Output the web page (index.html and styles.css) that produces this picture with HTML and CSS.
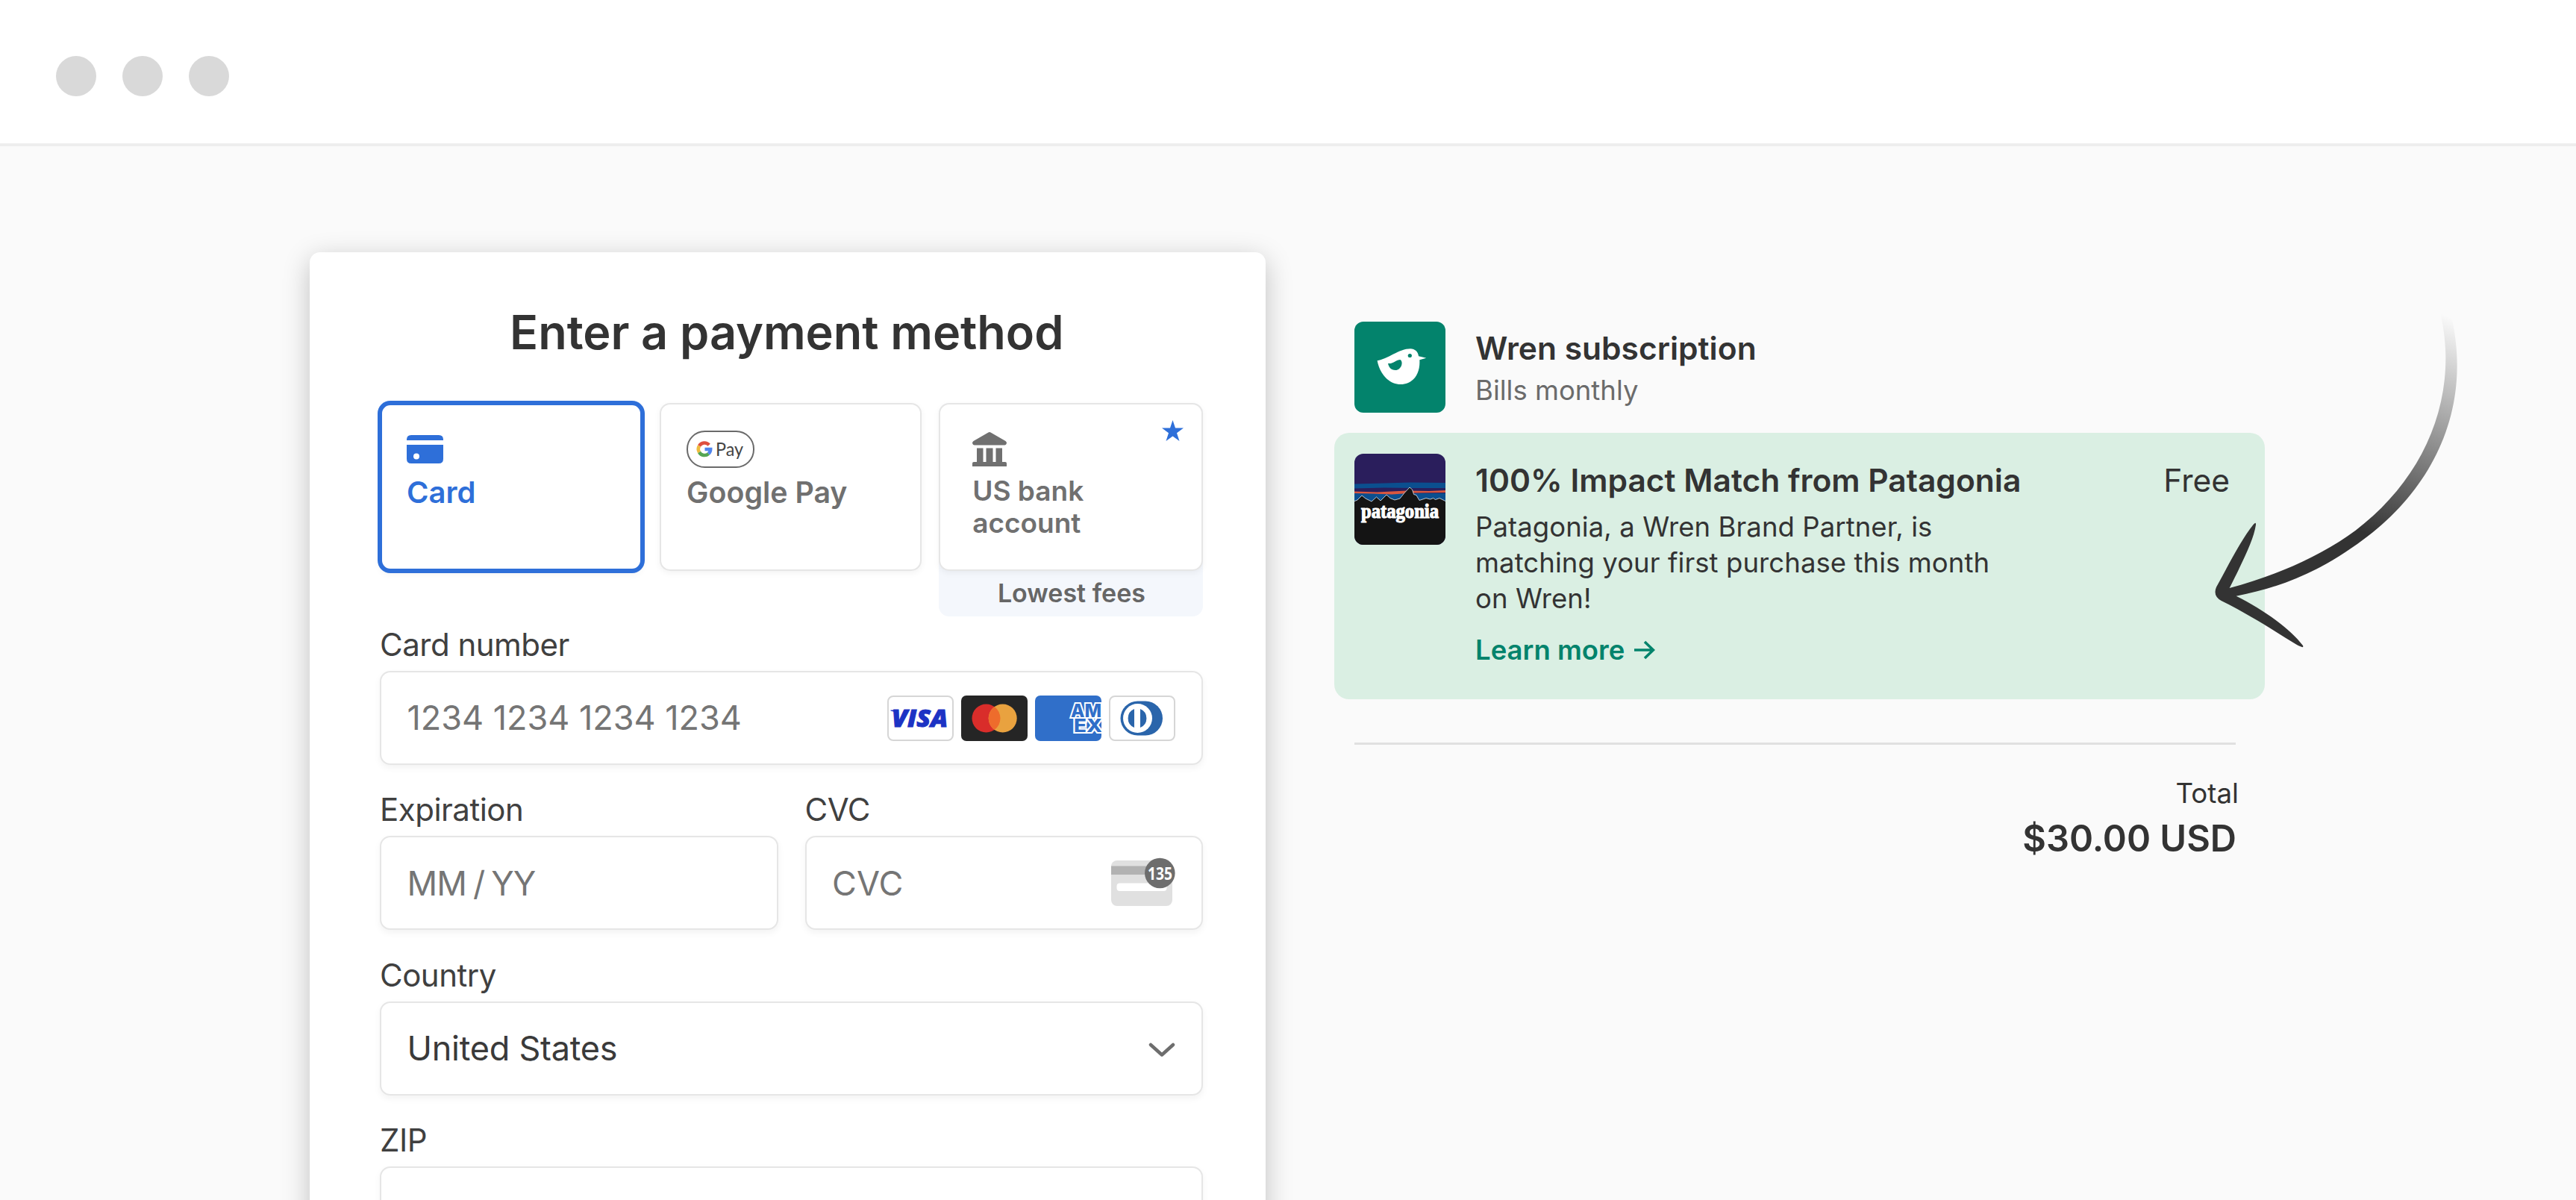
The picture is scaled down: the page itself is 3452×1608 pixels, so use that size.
FILE: index.html
```html
<!DOCTYPE html>
<html lang="en">
<head>
<meta charset="utf-8">
<title>Enter a payment method</title>
<link rel="stylesheet" href="styles.css">
</head>
<body>
<header class="chrome">
  <span class="dot"></span><span class="dot"></span><span class="dot"></span>
</header>
<main class="page">
  <section class="card">
    <h1 class="title">Enter a payment method</h1>
    <div class="form">
      <div class="tabs">
        <div class="tab tab-active">
          <div class="tab-icon">
            <svg width="49" height="38" viewBox="0 0 49 38"><path fill="#2e6fd9" d="M6 0H43Q49 0 49 6V7H0V6Q0 0 6 0Z"/><path fill="#2e6fd9" fill-rule="evenodd" d="M0 13H49V32Q49 38 43 38H6Q0 38 0 32ZM13 24.500A4 4 0 1 0 13 32.500A4 4 0 1 0 13 24.500Z"/></svg>
          </div>
          <div class="tab-label">Card</div>
        </div>
        <div class="tab">
          <div class="tab-icon">
            <svg width="91" height="50" viewBox="0 0 91 50"><rect x="1" y="1" width="89" height="48" rx="23.500" fill="#fff" stroke="#6a6a6a" stroke-width="2"/>
              <g fill="none" stroke-width="4.500"><path stroke="#de5040" d="M30.200 19.200A8.200 8.200 0 0 0 17 20.500"/><path stroke="#eebb3e" d="M17 20.500A8.200 8.200 0 0 0 17 29"/><path stroke="#55a653" d="M17 29A8.200 8.200 0 0 0 29.500 31"/><path stroke="#5085ed" d="M29.500 31A8.200 8.200 0 0 0 32.200 25H24.500"/></g>
              <text x="39" y="34" class="gpay-text" textLength="37" lengthAdjust="spacingAndGlyphs">Pay</text></svg>
          </div>
          <div class="tab-label">Google Pay</div>
        </div>
        <div class="tab-group">
          <div class="tab tab-bank">
            <div class="tab-icon">
              <svg width="46" height="46" viewBox="0 0 46 46"><path fill="#707070" d="M21 .700Q23 -.500 25 .700L44.500 12Q46 13 46 14.500Q45.500 17.500 43 17.500H3Q.500 17.500 0 14.500Q0 13 1.500 12ZM6 21.500H14.500V40H18.500V21.500H27.500V40H31.500V21.500H40V40H44Q46 40 46 42V46H0V42Q0 40 2 40H6Z"/></svg>
            </div>
            <div class="tab-label">US bank<br>account</div>
            <svg class="star" width="29" height="28" viewBox="0 0 29 28"><path fill="#2e6fd9" d="M14.500 0L18 10.500H29L20 17.200L23.500 28L14.500 21.400L5.500 28L9 17.200L0 10.500H11Z"/></svg>
          </div>
          <div class="fees">Lowest fees</div>
        </div>
      </div>

      <div class="field field-first">
        <div class="label">Card number</div>
        <div class="input">
          <span class="placeholder">1234 1234 1234 1234</span>
          <span class="brands">
            <svg width="89" height="61" viewBox="0 0 89 61"><rect x="1" y="1" width="87" height="59" rx="7" fill="#fff" stroke="#d6d6d6" stroke-width="2"/><text x="6" y="42" class="visa-text" textLength="75" lengthAdjust="spacingAndGlyphs">VISA</text><path fill="#1c33c4" d="M4.500 19.500H14V24Q9 21 4.500 20.500Z"/></svg>
            <svg width="89" height="61" viewBox="0 0 89 61"><rect width="89" height="61" rx="7" fill="#252525"/><circle cx="33.500" cy="30.500" r="19" fill="#d92d2a"/><circle cx="55.700" cy="30.500" r="19" fill="#e9a23f"/><path fill="#ee6c2c" d="M44.600 15.100A19 19 0 0 1 44.600 45.900A19 19 0 0 1 44.600 15.100Z"/></svg>
            <svg class="amex" width="89" height="61" viewBox="0 0 89 61"><rect width="89" height="61" fill="#306fc9"/><text x="48" y="29" class="amex-text" textLength="41" lengthAdjust="spacingAndGlyphs">AM</text><text x="52" y="49" class="amex-text" textLength="38" lengthAdjust="spacingAndGlyphs">EX</text></svg>
            <svg width="89" height="61" viewBox="0 0 89 61"><rect x="1" y="1" width="87" height="59" rx="7" fill="#fff" stroke="#d6d6d6" stroke-width="2"/><path fill="#2a65ab" d="M38.500 7.500H49A23 23 0 0 1 49 53.500H38.500A23 23 0 0 1 38.500 7.500Z"/><circle cx="38.500" cy="30.500" r="19.500" fill="#fff"/><path fill="#2a65ab" d="M34 18A13.500 13.500 0 0 0 34 43ZM42 18A13.500 13.500 0 0 1 42 43Z"/></svg>
          </span>
        </div>
      </div>

      <div class="field-row">
        <div class="field">
          <div class="label">Expiration</div>
          <div class="input"><span class="placeholder placeholder-date">MM / YY</span></div>
        </div>
        <div class="field">
          <div class="label">CVC</div>
          <div class="input"><span class="placeholder">CVC</span>
            <svg class="cvc" width="86" height="66" viewBox="0 0 86 66"><rect x="0" y="4" width="82" height="61" rx="8" fill="#e0e0e0"/><rect x="0" y="11.500" width="82" height="11.500" fill="#b2b2b2"/><rect x="7.500" y="34.500" width="67" height="10.500" rx="4" fill="#fff"/><circle cx="65.300" cy="21" r="20.300" fill="#6d6d6d"/><text x="49" y="29.500" class="cvc-text" textLength="33" lengthAdjust="spacingAndGlyphs">135</text></svg>
          </div>
        </div>
      </div>

      <div class="field">
        <div class="label">Country</div>
        <div class="input"><span class="value">United States</span>
          <svg class="chevron" width="36" height="20" viewBox="0 0 36 20"><path d="M3 3L18 16.500L33 3" fill="none" stroke="#6d6d6d" stroke-width="4.500" stroke-linecap="round" stroke-linejoin="round"/></svg>
        </div>
      </div>

      <div class="field">
        <div class="label">ZIP</div>
        <div class="input"></div>
      </div>
    </div>
  </section>

  <aside class="summary">
    <div class="item">
      <svg class="thumb" width="122" height="122" viewBox="0 0 122 122"><rect width="122" height="122" fill="#03836c"/><path fill="#fff" d="M30.600 52.300C44 50.500 60 36.300 75 36.300C81 36.300 85.500 40.500 86 46.300L96.300 48.700L87.300 51.300C88.500 72 77 84 62 84C46 84 34 70 30.600 52.300Z"/><circle cx="74.300" cy="45.500" r="2.600" fill="#03836c"/><path fill="#03836c" d="M45 56C52 57 56 51 61.500 51C66 54 63 65 55 65C49 65 46 61 45 56Z"/></svg>
      <div class="item-text">
        <div class="item-title">Wren subscription</div>
        <div class="item-sub">Bills monthly</div>
      </div>
    </div>

    <div class="match">
      <svg class="thumb" width="122" height="122" viewBox="0 0 122 122"><rect width="122" height="122" fill="#2a1e5c"/><path fill="#0b4f8f" d="M0 40.500L40 39.500L75 38.500L122 39V46H80L40 45.500L0 46.500ZM0 53H122V70H0Z"/><path fill="#d9573f" d="M0 50.500L30 51.500L70 49.500L100 50L122 49V52L80 52.500L50 54.500L25 53.500L0 53Z"/><path fill="#141414" stroke="#e8eef2" stroke-width=".8" d="M-1 64L4 62L10 56L15 60L23 64L29.500 58L35 63L43 55L48 59.500L54 62L61 60L67 52.500L74 45L77.500 48L79.600 54.500L83 55.500L87 62.500L96 59.500L101.600 61L105.700 59.500L108.500 61.500L114 59.500L123 64V123H-1Z"/><text x="9" y="86" class="pata-text" textLength="104" lengthAdjust="spacingAndGlyphs">patagonia</text></svg>
      <div class="item-text">
        <div class="item-title">100% Impact Match from Patagonia</div>
        <div class="item-desc">Patagonia, a Wren Brand Partner, is<br>matching your first purchase this month<br>on Wren!</div>
        <div class="learn">Learn more
          <svg width="28" height="26" viewBox="0 0 28 26"><path d="M0 13H25M14 2L25.500 13L14 24" fill="none" stroke="#03836c" stroke-width="3.600"/></svg>
        </div>
      </div>
      <div class="price">Free</div>
    </div>

    <hr class="rule">
    <div class="total-label">Total</div>
    <div class="total">$30.00 USD</div>
  </aside>

  <svg class="arrow" width="460" height="500" viewBox="0 0 1380 1500">
    <defs><linearGradient id="fade" gradientUnits="userSpaceOnUse" x1="850" y1="935" x2="1200" y2="70"><stop offset="0" stop-color="#333"/><stop offset="1" stop-color="#333" stop-opacity="0"/></linearGradient></defs>
    <path fill="url(#fade)" d="M1170 55C1186 125 1192 190 1192 240C1192 520 1050 765 830 932C690 1035 520 1110 323 1164C380 1050 420 970 429 910Q430 895 418 910C370 970 320 1070 270 1160Q255 1195 290 1215C420 1280 500 1335 590 1390Q625 1410 618 1395C570 1330 460 1250 350 1196C540 1160 700 1090 860 970C1085 805 1238 560 1238 270C1238 210 1232 150 1218 85Z"/>
  </svg>
</main>
</body>
</html>
```
FILE: styles.css
```css
* { box-sizing: border-box; }
body { margin: 0; width: 3452px; height: 1608px; overflow: hidden; background: #fafafa; font-family: Inter, "Liberation Sans", sans-serif; color: #333; }
svg { display: block; flex: none; }

.chrome { display: flex; gap: 35px; height: 196px; padding: 75px; background: #fff; border-bottom: 4px solid #eee; }
.dot { flex: none; width: 54px; height: 54px; border-radius: 50%; background: #d9d9d9; }

.page { position: relative; display: flex; align-items: flex-start; height: 1412px; padding: 142px 0 0 414.5px; overflow: hidden; }

.card { flex: none; width: 1281px; height: 1400px; padding-top: 69px; background: #fff; border-radius: 14px; box-shadow: 0 9px 36px rgba(0, 0, 0, .23); }
.title { margin: 0; padding-right: 1.5px; text-align: center; font-size: 63px; line-height: 76px; font-weight: 600; letter-spacing: -.07px; }
.form { padding: 57px 83.3px 0 94.5px; }

.tabs { display: grid; grid-template-columns: 352px 350.5px 354.5px; justify-content: space-between; align-items: start; }
.tab { position: relative; height: 225px; padding: 34px 0 0 34px; background: #fff; border: 2.5px solid #e6e6e6; border-radius: 14px; box-shadow: 0 3px 8px rgba(0, 0, 0, .05); color: #707070; }
.tab-active { border: 3px solid #2e6fd9; box-shadow: 0 0 0 3px #2e6fd9, 0 5px 10px rgba(0, 0, 0, .05); color: #2e6fd9; padding: 33px 0 0 33px; }
.tab-icon { display: flex; align-items: center; height: 51px; }
.tab-label { margin-top: 11.5px; font-size: 39.3px; line-height: 42.5px; font-weight: 600; }
.tab-active .tab-label { font-size: 40px; }
.tab-bank { padding-left: 43.5px; }
.tab-bank .tab-label { margin-top: 10px; font-size: 37px; }
.tab-group { background: #f4f7fc; border-radius: 14px; }
.star { position: absolute; right: 24px; top: 21px; }
.fees { height: 61px; padding: 9px 0 0 2px; text-align: center; font-size: 34px; line-height: 42px; font-weight: 600; color: #666; }

.field { flex: 1; margin-top: 35.5px; }
.field-first { margin-top: 12.7px; }
.field-row { display: flex; gap: 36px; }
.label { font-size: 42px; line-height: 50px; letter-spacing: -.5px; color: #404040; }
.input { display: flex; align-items: center; justify-content: space-between; height: 126px; margin-top: 10px; padding: 1px 35.5px 0 34.5px; background: #fff; border: 2.5px solid #e6e6e6; border-radius: 14px; box-shadow: 0 4px 10px rgba(0, 0, 0, .05); font-size: 45px; line-height: 56px; }
.placeholder { color: #757575; }
.placeholder-date { letter-spacing: -1px; word-spacing: -2.5px; }
.value { color: #3a3a3a; letter-spacing: -.25px; }
.brands { display: flex; gap: 9.8px; }
.amex { border-radius: 7px; }
.cvc { overflow: visible; margin-top: -3px; }
.chevron { margin-top: 3px; }

.gpay-text { font: 400 25px Lato, sans-serif; fill: #444; }
.visa-text { font: italic 800 31px "Open Sans", sans-serif; fill: #1c33c4; stroke: #1c33c4; stroke-width: 1px; }
.amex-text { font: 800 24px Inter, sans-serif; fill: #306fc9; stroke: #fff; stroke-width: 4px; paint-order: stroke; }
.cvc-text { font: 700 24px "Noto Sans", sans-serif; fill: #fff; }
.pata-text { font: 700 27px "Liberation Serif", serif; fill: #fff; stroke: #fff; stroke-width: 1.2px; }

.summary { flex: none; width: 1247px; margin: 93px 0 0 92.5px; }
.thumb { border-radius: 12px; }
.item { display: flex; gap: 40px; padding-left: 27px; }
.item-text { padding-top: 10px; }
.item-title { font-size: 42.5px; line-height: 52px; font-weight: 600; white-space: nowrap; }
.item-sub { margin-top: 6px; font-size: 36.5px; line-height: 48px; color: #6b6b6b; }
.match { display: flex; gap: 40px; height: 357px; margin-top: 27px; padding: 27.5px 47px 0 27px; background: #daefe3; border-radius: 20px; }
.item-desc { margin-top: 12.5px; font-size: 36.5px; line-height: 48px; letter-spacing: .08px; white-space: nowrap; }
.learn { display: flex; align-items: center; gap: 13px; margin-top: 20.5px; font-size: 36.5px; line-height: 48px; font-weight: 600; color: #03836c; }
.price { margin-left: auto; padding-top: 10px; font-size: 42.5px; line-height: 52px; }
.rule { height: 3px; margin: 58px 39px 0 27px; border: 0; background: #e0e0e0; }
.total-label { margin-top: 42.5px; padding-right: 35px; text-align: right; font-size: 36.7px; line-height: 44px; }
.total { margin-top: 10px; padding-right: 38px; text-align: right; font-size: 48.7px; line-height: 58px; font-weight: 600; }
.arrow { position: absolute; left: 2880px; top: 204px; }
```
